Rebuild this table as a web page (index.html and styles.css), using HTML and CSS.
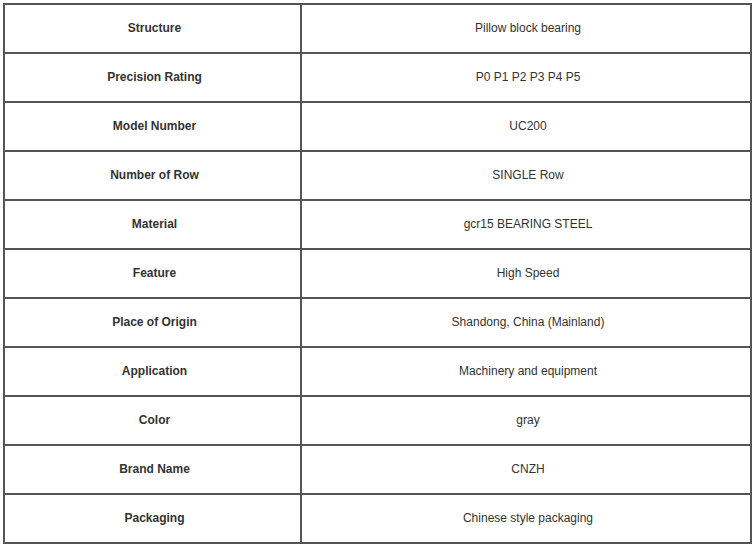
FILE: index.html
```html
<!DOCTYPE html>
<html>
<head>
<meta charset="utf-8">
<link rel="stylesheet" href="styles.css">
</head>
<body>
<table class="spec">
<tr><td class="k">Structure</td><td class="v">Pillow block bearing</td></tr>
<tr><td class="k">Precision Rating</td><td class="v">P0 P1 P2 P3 P4 P5</td></tr>
<tr><td class="k">Model Number</td><td class="v">UC200</td></tr>
<tr><td class="k">Number of Row</td><td class="v">SINGLE Row</td></tr>
<tr><td class="k">Material</td><td class="v">gcr15 BEARING STEEL</td></tr>
<tr><td class="k">Feature</td><td class="v">High Speed</td></tr>
<tr><td class="k">Place of Origin</td><td class="v">Shandong, China (Mainland)</td></tr>
<tr><td class="k">Application</td><td class="v">Machinery and equipment</td></tr>
<tr><td class="k">Color</td><td class="v">gray</td></tr>
<tr><td class="k">Brand Name</td><td class="v">CNZH</td></tr>
<tr><td class="k">Packaging</td><td class="v">Chinese style packaging</td></tr>
</table>
</body>
</html>
```
FILE: styles.css
```css
html, body {
  margin: 0;
  padding: 0;
  background: #fff;
}
body {
  padding: 3px 0 0 3px;
  font-family: "Liberation Sans", Arial, sans-serif;
  font-size: 12px;
  color: #333;
}
.spec {
  border-collapse: collapse;
  width: 749px;
  table-layout: fixed;
}
.spec td {
  border: 2px solid #555;
  height: 45px;
  padding: 0 0 2px 4px;
  text-align: center;
  vertical-align: middle;
}
.spec td.k {
  width: 291px;
  font-weight: bold;
}
```
